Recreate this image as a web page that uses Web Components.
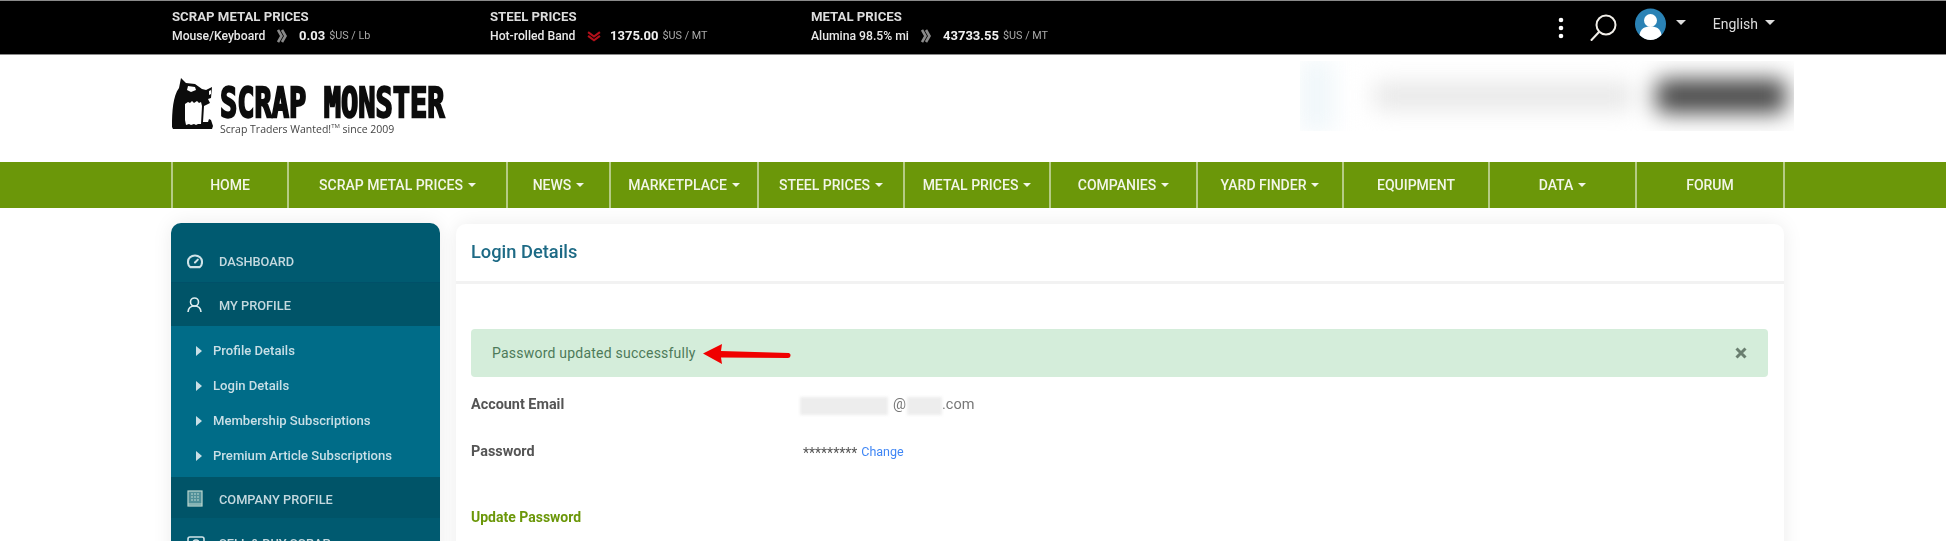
<!DOCTYPE html>
<html lang="en"><head><meta charset="utf-8"><title>Login Details</title>
<style>
html,body{margin:0;height:541px;overflow:hidden;background:#fff;font-family:Roboto,"Liberation Sans",sans-serif}
sm-ticker,sm-header,sm-nav,sm-layout{filter:blur(.35px)}
</style></head><body>
<sm-ticker></sm-ticker>
<sm-header></sm-header>
<sm-nav></sm-nav>
<sm-layout>
  <sm-sidebar slot="side"></sm-sidebar>
  <sm-card slot="main" heading="Login Details">
    <sm-alert>Password updated successfully</sm-alert>
    <sm-details></sm-details>
  </sm-card>
</sm-layout>
<script>
const def=(name,css,html)=>customElements.define(name,class extends HTMLElement{
  constructor(){super();this.attachShadow({mode:'open'}).innerHTML='<style>'+css+'</style>'+(typeof html==='function'?html(this):html);}
  connectedCallback(){if(typeof html==='function')this.shadowRoot.innerHTML='<style>'+css+'</style>'+html(this);}
});
const chev=c=>`<svg width="10" height="14" viewBox="0 0 10 14" fill="none" stroke="${c}" stroke-width="2.600"><path d="M1 1l3.500 6L1 13M5 1l3.500 6L5 13"/></svg>`;
const down=`<svg width="14" height="11" viewBox="0 0 13 10" fill="none" stroke="#b3101a" stroke-width="2"><path d="M1 1l5.500 4L12 1M1 4.500l5.500 4 5.500-4"/></svg>`;
const attr=(h,n)=>h.getAttribute(n)||'';
def('sm-tick',`
:host{display:block;color:#fff}
.t{font:700 13.200px/18px Roboto,sans-serif;color:#ddd;height:19px;padding-top:1px;box-sizing:border-box;margin-bottom:1px;white-space:nowrap}
.r{display:flex;align-items:center;height:18px;white-space:nowrap;font:500 12.200px/18px Roboto,sans-serif;color:#e8e8e8}
.a{display:flex;justify-content:center;width:var(--aw,34px);flex:none}
.l{width:var(--lw,93px);flex:none;white-space:nowrap}
b{font:700 13px/18px Roboto,sans-serif;color:#f0f0f0;margin-right:4px}
i{font:400 10.800px/18px Roboto,sans-serif;color:#aaa}
`,h=>`<div class="t">${attr(h,'title-text')}</div><div class="r"><span class="l">${attr(h,'label')}</span><span class="a">${attr(h,'trend')==='down'?down:chev('#8a8a8a')}</span><b>${attr(h,'value')}</b><i>${attr(h,'unit')}</i></div>`);
def('sm-ticker',`
:host{display:flex;box-sizing:border-box;height:55px;background:#000;border-top:1px solid #8a8a8a;border-bottom:1px solid #8a8a8a;padding:6px 171px 0 172px}
sm-tick{width:318px}
sm-tick+sm-tick{width:321px}
.right{margin-left:auto;display:flex;align-items:flex-start;color:#ddd}
.dots{margin:10px 26px 0 0}
.search{margin:7px 18px 0 0}
.av{margin:1px 10px 0 0}
.car{width:0;height:0;border:5px solid transparent;border-top-color:#ddd;border-bottom:0;margin-top:13px}
.en{font:400 14px/18px Roboto,sans-serif;margin:8px 7px 0 27px}
`,`<sm-tick title-text="SCRAP METAL PRICES" label="Mouse/Keyboard" value="0.03" unit="$US / Lb" style="--lw:93px;--aw:34px"></sm-tick>
<sm-tick title-text="STEEL PRICES" label="Hot-rolled Band" trend="down" value="1375.00" unit="$US / MT" style="--lw:87px;--aw:33px"></sm-tick>
<sm-tick title-text="METAL PRICES" label="Alumina 98.5% mi" value="43733.55" unit="$US / MT" style="--lw:98px;--aw:34px"></sm-tick>
<div class="right">
<svg class="dots" width="6" height="22" viewBox="0 0 6 22" fill="#fff"><circle cx="3" cy="3" r="2.300"/><circle cx="3" cy="11" r="2.300"/><circle cx="3" cy="19" r="2.300"/></svg>
<svg class="search" width="27" height="27" viewBox="0 0 27 27" fill="none" stroke="#f2efe9" stroke-width="2"><circle cx="16" cy="11" r="9.500"/><path d="M9 18L1.500 26" stroke-linecap="round"/></svg>
<svg class="av" width="31" height="32" viewBox="0 0 31 32"><circle cx="15.500" cy="16" r="15.500" fill="#2a82b5"/><circle cx="15.500" cy="12.500" r="6.500" fill="#fff"/><path d="M4.500 27c1-6.500 5-8.500 11-8.500s10 2 11 8.500c-3 3-7 5-11 5s-8-2-11-5z" fill="#fff"/></svg>
<span class="car"></span><span class="en">English</span><span class="car"></span>
</div>`);
def('sm-logo',`
:host{display:flex;align-items:flex-start;margin-top:16px;width:276px}
.txt{margin-left:7px;display:flex;flex-direction:column}
.name{font:700 28.700px/30px "DejaVu Sans Mono",monospace;height:30px;margin-top:11px;color:#0c0c0c;-webkit-text-stroke:1.600px #0c0c0c;transform:scaleY(1.42);white-space:nowrap}
.tag{font:400 10.500px/14px "Open Sans",sans-serif;color:#444;margin-top:4px;white-space:nowrap}
sup{font-size:6px;line-height:0;vertical-align:5px}
`,`<svg width="41" height="55" viewBox="4 1 41 55"><path d="M13 2l5 5 9 1 7 5 4 1 6-3-1 11-3 1 2 4-6 3-1 16 5 0 1-3 2 1 2 6-1 3H5l-1-2C4 35 5 20 11 12z" fill="#0c0c0c"/><path d="M20 10l7 1 1 3-5 2-4-2zM41 15l2-1v4l-2 1z" fill="#fff"/><path d="M17 28l3-2 2 1 2-2 2 2 3-2 2 2 2-1 1 4-1 18-3 0-2 1-2-1-3 1-2-1-3 1-1-5z" fill="#fff"/></svg>
<div class="txt"><div class="name">SCRAP MONSTER</div><div class="tag">Scrap Traders Wanted!<sup>TM</sup> since 2009</div></div>`);
def('sm-ad',`
:host{display:block;width:494px;height:70px;overflow:hidden;background:#fff}
.w{display:flex;align-items:center;height:100%;box-sizing:border-box;filter:blur(11px)}
.b{width:34px;height:70px;background:#f0f7fa;flex:none}
.g{height:28px;width:260px;background:#e8e8e8;margin-left:40px;flex:none}
.d{height:34px;width:130px;background:#484848;margin-left:22px;border-radius:6px;flex:none}
`,`<div class="w" aria-hidden="true"><div class="b"></div><div class="g"></div><div class="d"></div></div>`);
def('sm-header',`
:host{display:flex;justify-content:space-between;align-items:flex-start;box-sizing:border-box;height:107px;padding:6px 152px 0 172px;background:#fff}
`,`<sm-logo></sm-logo><sm-ad></sm-ad>`);
def('sm-nav',`
:host{display:block;height:46px;background:#6b9709}
.g{display:grid;grid-template-columns:116px 219px 103px 148px 146px 146px 147px 146px 146px 147px 148px;margin-left:171px;height:46px;border-right:2px solid #b5cb84;box-sizing:border-box;width:1614px}
a{display:flex;align-items:center;justify-content:center;border-left:2px solid #b5cb84;color:#f2f6e8;font:500 14px/46px Roboto,sans-serif;white-space:nowrap;box-sizing:border-box}
a.c::after{content:"";border:4px solid transparent;border-top-color:#f2f6e8;border-bottom:0;margin-left:5px}
`,`<div class="g">${[['HOME'],['SCRAP METAL PRICES',1],['NEWS',1],['MARKETPLACE',1],['STEEL PRICES',1],['METAL PRICES',1],['COMPANIES',1],['YARD FINDER',1],['EQUIPMENT'],['DATA',1],['FORUM']].map(([t,c])=>`<a class="${c?'c':''}">${t}</a>`).join('')}</div>`);
def('sm-layout',`
:host{display:grid;grid-template-columns:269px 1328px;column-gap:16px;padding:15px 0 0 171px;align-items:start}
::slotted([slot=main]){margin-top:1px}
`,`<slot name="side"></slot><slot name="main"></slot>`);
const ic={
 dash:`<svg width="16" height="15" viewBox="0 0 17 16" fill="none" stroke="#cfe3e8" stroke-width="2.200"><path d="M3.500 14C1.800 12.800 1 11 1 8.500a7.500 7 0 0 1 15 0c0 2.500-.8 4.300-2.500 5.500z"/><path d="M8.500 9l3-3" stroke-linecap="round"/></svg>`,
 user:`<svg width="15" height="16" viewBox="0 0 15 16" fill="none" stroke="#dcebee" stroke-width="1.600"><circle cx="7.500" cy="5" r="4"/><path d="M1 15c.3-4 2.500-6 6.500-6s6.200 2 6.500 6"/></svg>`,
 comp:`<svg width="16" height="17" viewBox="0 0 16 17" fill="none" stroke="#bcd8cf" stroke-width="1.200"><rect x="1" y="1" width="14" height="15" fill="#4f8f98"/><path d="M1 14h14M4 4h2M7 4h2M10 4h2M4 7h2M7 7h2M10 7h2M4 10h2M7 10h2M10 10h2"/></svg>`,
 sell:`<svg width="18" height="14" viewBox="0 0 18 14" fill="none" stroke="#cfe3e8" stroke-width="1.600"><rect x="1" y="1" width="16" height="12" rx="2"/><circle cx="9" cy="7" r="3"/></svg>`};
def('sm-sidebar',`
:host{display:block;background:#005a70;border-radius:10px 10px 0 0;height:400px;overflow:hidden;color:#cfe0e5;box-shadow:0 0 20px rgba(0,0,0,.08)}
.m{display:flex;align-items:center;font:500 12.800px/1 Roboto,sans-serif;color:#c4d9df;box-sizing:border-box;padding-left:16px}
.m span.i{width:32px;flex:none;display:flex;margin-top:-3px}
.d{height:60px;padding-top:20px;border-bottom:1px solid #005068}
.p{height:43px;background:#005468;padding-top:3px}
.s{background:#006c88;padding:7px 0 6px 25px;height:151px;box-sizing:border-box}
.s a{display:flex;align-items:center;height:35px;font:500 13.100px/1 Roboto,sans-serif;color:#c9dfe6}
.s a::before{content:"";border:5px solid transparent;border-left:6px solid #c9dfe6;border-right:0;margin-right:11px}
.c{height:42px;background:#005468;border-bottom:1px solid #005a70;padding-top:5px}
.x{height:42px;padding-top:8px}
`,`<div class="m d"><span class="i">${ic.dash}</span>DASHBOARD</div>
<div class="m p"><span class="i">${ic.user}</span>MY PROFILE</div>
<div class="s"><a>Profile Details</a><a>Login Details</a><a>Membership Subscriptions</a><a>Premium Article Subscriptions</a></div>
<div class="m c"><span class="i">${ic.comp}</span>COMPANY PROFILE</div>
<div class="m x"><span class="i">${ic.sell}</span>SELL &amp; BUY SCRAP</div>`);
def('sm-card',`
:host{display:block;background:#fff;border-radius:10px 10px 0 0;height:400px;box-shadow:0 0 20px rgba(0,0,0,.08)}
h2{margin:0;box-sizing:border-box;padding:0 15px;display:flex;align-items:center;font:500 18.300px/1 Roboto,sans-serif;color:#1d6a85;border-bottom:3px solid #f2f2f2;height:60px}
.b{padding:45px 16px 0 15px}
`,h=>`<h2>${attr(h,'heading')}</h2><div class="b"><slot></slot></div>`);
def('sm-alert',`
:host{display:flex;align-items:center;height:48px;background:#d4edda;border-radius:4px;padding:0 21px;color:#4d7a59;font:400 14px/1 Roboto,sans-serif;letter-spacing:.22px;position:relative}
.arrow{position:absolute;left:232px;top:15px}
.x{margin-left:auto;display:flex}
`,`<span><slot></slot></span><svg class="arrow" width="88" height="20" viewBox="0 0 88 20"><path d="M0 9.500L19 0l-1 7 68 2q2 1 1.500 3-.5 2-2.500 2L18 13.500l1 6.500z" fill="#f00000"/></svg><svg class="x" width="12" height="12" viewBox="0 0 12 12" stroke="#6a7f70" stroke-width="3"><path d="M1.500 1.500l9 9M10.500 1.500l-9 9"/></svg>`);
def('sm-details',`
:host{display:block;font:400 14px/1 Roboto,sans-serif;color:#555}
.r{display:grid;grid-template-columns:329px 1fr;height:47px;align-items:center}
.r:first-of-type{margin-top:5px}
b{font:700 14.400px/1 Roboto,sans-serif;color:#555}
.v{display:flex;align-items:center;color:#777;font-size:14.500px}
.bl{display:inline-block;background:#ededed;height:18px;filter:blur(1.500px)}
.pw{font-size:14px;color:#555;margin-left:3px}
a{color:#3f86f5;font-size:12.500px;margin-left:4px}
h3{margin:31px 0 0;font:700 14px/1 Roboto,sans-serif;color:#6b9709;height:20px;display:flex;align-items:center}
`,`<div class="r"><b>Account Email</b><span class="v"><span class="bl" style="width:88px"></span><span style="margin-left:5px">@</span><span class="bl" style="width:35px;margin-left:1px"></span>.com</span></div>
<div class="r"><b>Password</b><span class="v"><span class="pw">*********</span><a>Change</a></span></div>
<h3>Update Password</h3>`);
</script>
</body></html>
